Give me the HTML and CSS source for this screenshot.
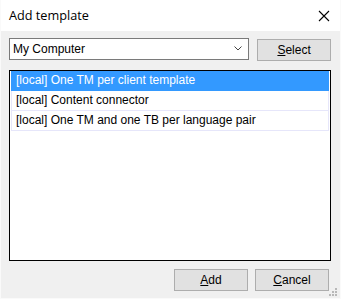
FILE: index.html
```html
<!DOCTYPE html>
<html lang="en">
<head>
  <meta charset="UTF-8" />
  <title>Add template</title>
  <link rel="stylesheet" href="styles.css">
</head>
<body>

<div class="window">
  <div class="titlebar">
    <span class="title">Add template</span>
    <svg class="close" width="12" height="12" viewBox="0 0 12 12">
      <path d="M1 1 L11 11 M11 1 L1 11" stroke="#000" stroke-width="1.1" fill="none"/>
    </svg>
  </div>

  <div class="content">
    <div class="top-row">
      <div class="combo">
        <span>My Computer</span>
        <svg class="chevron" width="8" height="5" viewBox="0 0 8 5">
          <path d="M0.5 0.5 L4 4 L7.5 0.5" stroke="#444" stroke-width="1" fill="none"/>
        </svg>
      </div>
      <button class="btn btn-select"><u>S</u>elect</button>
    </div>

    <div class="listbox">
      <div class="item selected">[local] One TM per client template</div>
      <div class="item">[local] Content connector</div>
      <div class="item">[local] One TM and one TB per language pair</div>
    </div>

    <div class="actions">
      <button class="btn"><u>A</u>dd</button>
      <button class="btn"><u>C</u>ancel</button>
    </div>
  </div>

  <svg class="grip" width="8" height="8" viewBox="0 0 8 8">
    <rect x="6" y="0" width="2" height="2" fill="#b8b8b8"/>
    <rect x="3" y="3" width="2" height="2" fill="#b8b8b8"/>
    <rect x="6" y="3" width="2" height="2" fill="#b8b8b8"/>
    <rect x="0" y="6" width="2" height="2" fill="#b8b8b8"/>
    <rect x="3" y="6" width="2" height="2" fill="#b8b8b8"/>
    <rect x="6" y="6" width="2" height="2" fill="#b8b8b8"/>
  </svg>
</div>

</body>
</html>
```

FILE: styles.css
```css
* { box-sizing: border-box; margin: 0; padding: 0; }
body { width: 341px; height: 299px; overflow: hidden; font-family: "Liberation Sans", Arial, sans-serif; font-size: 12px; color: #000; }

.window {
  position: relative;
  width: 341px; height: 299px;
  background: #f0f0f0;
  border: 1px solid #fafafa;
  border-top: none;
}

.titlebar {
  height: 31px; background: #fff;
  display: flex; align-items: center; justify-content: space-between;
  padding: 0 9px 0 8px;
}
.title { font-family: "Open Sans", sans-serif; font-size: 12.7px; padding-bottom: 1px; }
.close { margin-right: 1px; }

.content { padding: 7px 9px 0 8px; }

.top-row { display: flex; gap: 8px; }
.combo {
  width: 241px; height: 22px;
  background: #fff; border: 1px solid #7a7a7a;
  display: flex; align-items: center; justify-content: space-between;
  padding: 0 6px 0 3px;
}
.chevron { margin-bottom: 1px; }

.btn {
  width: 74px; height: 22px;
  background: #e1e1e1; border: 1px solid #adadad;
  font-family: "Liberation Sans", Arial, sans-serif; font-size: 12px; color: #000;
}
.btn u { text-decoration-thickness: 1px; text-underline-offset: 1px; }
.btn-select { margin-top: 1px; }

.listbox {
  margin-top: 9px;
  width: 322px; height: 191px;
  background: #fff; border: 1px solid #000;
  padding: 0 1px;
}
.item {
  height: 20px; line-height: 19px;
  padding-left: 4px;
  border: 1px solid #e6e6fa; border-top: none;
}
.item.selected { background: #3399ff; border-color: #3399ff; color: #fff; }

.actions { display: flex; justify-content: flex-end; gap: 7px; margin-top: 8px; padding-right: 2px; }

.grip { position: absolute; right: 3px; bottom: 2px; }
```
